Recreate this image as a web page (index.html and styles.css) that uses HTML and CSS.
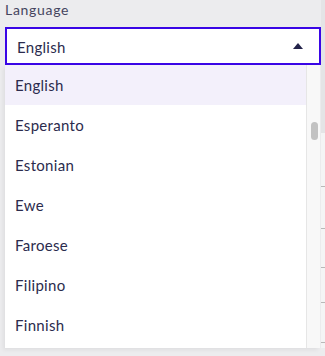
FILE: index.html
```html
<!DOCTYPE html>
<html>
<head>
<meta charset="utf-8">
<link rel="stylesheet" href="styles.css">
</head>
<body>
<div class="page">
  <div class="main">
    <div class="label">Language</div>
    <div class="field">
      <div class="select">
        <span class="value">English</span>
        <svg class="caret" width="10" height="6" viewBox="0 0 10 6"><path d="M0 6 L5 0 L10 6 Z" fill="#23234a"/></svg>
      </div>
      <div class="menu">
        <ul class="options">
          <li class="option active">English</li>
          <li class="option">Esperanto</li>
          <li class="option">Estonian</li>
          <li class="option">Ewe</li>
          <li class="option">Faroese</li>
          <li class="option">Filipino</li>
          <li class="option">Finnish</li>
        </ul>
        <div class="track"><div class="thumb"></div></div>
      </div>
    </div>
  </div>
  <div class="side">
    <div class="side-top"></div>
    <div class="side-rows">
      <div class="side-row r1"></div>
      <div class="side-row r2"></div>
      <div class="side-row r3"></div>
      <div class="side-row r4"></div>
      <div class="side-row r5"></div>
    </div>
  </div>
</div>
</body>
</html>
```
FILE: styles.css
```css
* { box-sizing: border-box; }
html, body { margin: 0; padding: 0; }
body {
  width: 325px;
  height: 356px;
  overflow: hidden;
  background: #ececee;
  font-family: Lato, "Noto Sans", sans-serif;
  color: #2b2b4d;
}
.page {
  display: flex;
  height: 356px;
}
.main {
  width: 321px;
  padding-left: 5px;
  display: flex;
  flex-direction: column;
}
.label {
  font-size: 14px;
  line-height: 16px;
  padding-top: 2px;
  height: 27px;
  color: #45455e;
  letter-spacing: 0.7px;
}
.field {
  display: flex;
  flex-direction: column;
}
.select {
  height: 38px;
  border: 2px solid #3a06e6;
  background: #fff;
  display: flex;
  align-items: center;
  justify-content: space-between;
  padding: 0 16px 0 10px;
}
.value {
  font-size: 15px;
  letter-spacing: 0.3px;
  color: #2b2b4d;
  padding-top: 1px;
}
.caret { display: block; margin-bottom: 1px; }
.menu {
  height: 283px;
  width: 315px;
  background: #fff;
  display: flex;
  box-shadow: -2px 2px 4px rgba(0,0,0,0.06);
}
.options {
  list-style: none;
  margin: 0;
  padding: 0;
  flex: 1;
}
.option {
  height: 40px;
  line-height: 40px;
  padding-left: 10px;
  font-size: 15px;
  letter-spacing: 0.3px;
  color: #2b2b4d;
}
.option.active { background: #f3f0fb; }
.track {
  width: 14px;
  background: #f8f8f8;
  border-left: 1px solid #e6e6e6;
  padding-top: 57px;
  display: flex;
  justify-content: center;
}
.thumb {
  width: 7px;
  height: 18px;
  border-radius: 4px;
  background: #c2c2c2;
  margin-left: 1px;
}
.side {
  width: 4px;
  display: flex;
  flex-direction: column;
}
.side-top {
  height: 133px;
  background: #e4e4e6;
}
.side-rows {
  flex: 1;
  background: #f4f4f5;
  border-bottom: 8px solid #ececee;
}
.side-row {
  height: 1px;
  background: #b8b8b8;
}
.r1 { margin-top: 53px; }
.r2 { margin-top: 41px; }
.r3 { margin-top: 38px; }
.r4 { margin-top: 34px; }
.r5 { margin-top: 39px; }
```
